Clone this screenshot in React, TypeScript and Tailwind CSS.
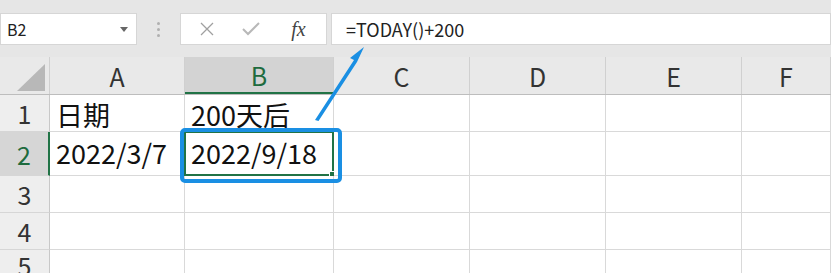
import React from 'react';

const cols = ['A', 'B', 'C', 'D', 'E', 'F'];
const rowHeights = ['h-[37px]', 'h-[44px]', 'h-[37px]', 'h-[37px]', 'h-[30px]'];
const colWidths = ['w-[135px]', 'w-[149px]', 'w-[136px]', 'w-[136px]', 'w-[136px]', 'w-[89px]'];

const cells: Record<string, string> = {
  A1: '日期',
  B1: '200天后',
  A2: '2022/3/7',
  B2: '2022/9/18',
};

const cellFont = { fontFamily: '"Noto Sans CJK SC", "Noto Sans", sans-serif' };

const App = () => {
  return (
    <div className="relative w-[831px] h-[273px] overflow-hidden bg-white" style={{ fontFamily: '"Noto Sans", "Noto Sans CJK SC", sans-serif' }}>
      {/* Formula bar */}
      <div className="h-[57px] bg-[#e6e6e6] flex items-start pt-[13px]">
        <div className="w-[137px] h-[32px] bg-white border border-[#d6d6d6] flex items-center justify-between pl-[6px] pr-[8px]">
          <span className="text-[16px] text-[#222]" style={cellFont}>B2</span>
          <svg width="8" height="5" viewBox="0 0 8 5"><path d="M0 0 L8 0 L4 5 Z" fill="#666" /></svg>
        </div>
        <div className="w-[43px] h-[32px] flex flex-col items-center justify-center gap-[3px]">
          <span className="w-[3px] h-[3px] rounded-full bg-[#b0b0b0]" />
          <span className="w-[3px] h-[3px] rounded-full bg-[#b0b0b0]" />
          <span className="w-[3px] h-[3px] rounded-full bg-[#b0b0b0]" />
        </div>
        <div className="w-[147px] h-[32px] bg-white border border-[#d6d6d6] flex items-center">
          <div className="w-[48px] flex justify-center pl-[4px]">
            <svg width="16" height="16" viewBox="0 0 16 16"><path d="M2 2 L14 14 M14 2 L2 14" stroke="#a0a0a0" strokeWidth="1.3" /></svg>
          </div>
          <div className="w-[44px] flex justify-center">
            <svg width="18" height="14" viewBox="0 0 18 14"><path d="M1 7 L6 12 L17 1" stroke="#b8b8b8" strokeWidth="2" fill="none" /></svg>
          </div>
          <div className="flex-1 flex justify-center pr-[2px]">
            <span className="text-[20px] italic text-[#444]" style={{ fontFamily: '"Liberation Serif", serif' }}>fx</span>
          </div>
        </div>
        <div className="ml-[4px] flex-1 h-[32px] bg-white border border-[#d6d6d6] flex items-center pl-[14px]">
          <span className="text-[18px] text-[#222]" style={cellFont}>=TODAY()+200</span>
        </div>
      </div>

      {/* Grid */}
      <div className="flex flex-col">
        <div className="flex h-[38px] bg-[#e9e9e9] border-b border-[#bdbdbd]">
          <div className="w-[50px] h-full flex items-end justify-end pr-[4px] pb-[3px] border-r border-[#d0d0d0]">
            <svg width="28" height="27" viewBox="0 0 28 27"><path d="M28 0 L28 27 L0 27 Z" fill="#b8b8b8" /></svg>
          </div>
          {cols.map((c, i) => (
            <div
              key={c}
              className={`${colWidths[i]} h-full flex items-center justify-center pt-[2px] border-r border-[#d0d0d0] text-[25px] ${c === 'B' ? 'bg-[#d3d3d3] text-[#1e6b3e] border-b-2 border-b-[#217346]' : 'text-[#333]'}`}
              style={cellFont}
            >
              {c}
            </div>
          ))}
        </div>
        {rowHeights.map((h, r) => (
          <div key={r} className={`flex ${h}`}>
            <div
              className={`w-[50px] h-full flex items-center justify-center pt-[2px] border-b border-[#d6d6d6] text-[25px] ${r === 1 ? 'bg-[#d6d6d6] text-[#1e6b3e] border-r-2 border-r-[#217346]' : 'bg-[#eeeeee] text-[#333] border-r border-r-[#c8c8c8]'}`}
              style={cellFont}
            >
              {r + 1}
            </div>
            {cols.map((c, i) => {
              const key = `${c}${r + 1}`;
              const selected = key === 'B2';
              return (
                <div
                  key={key}
                  className={`relative ${colWidths[i]} h-full flex items-center pl-[6px] ${r === 0 ? 'pt-[4px]' : ''} border-r border-b border-[#d9d9d9] text-[27px] text-[#111] whitespace-nowrap`}
                  style={cellFont}
                >
                  {cells[key]}
                  {selected && (
                    <div className="absolute inset-[-1px] border-2 border-[#217346]">
                      <div className="absolute right-[-3px] bottom-[-3px] w-[6px] h-[6px] bg-[#217346] border border-white" />
                    </div>
                  )}
                </div>
              );
            })}
          </div>
        ))}
      </div>

      {/* Annotation: blue frame and arrow */}
      <div className="absolute left-[180px] top-[128px] w-[162px] h-[55px] rounded-[5px] border-[4px] border-[#1a8fe3]" />
      <svg className="absolute left-0 top-0" width="831" height="273" viewBox="0 0 831 273">
        <path d="M315 120 L318.5 121 L357 62 L364 47 L350 58 L354 60 Z" fill="#1a8fe3" />
      </svg>
    </div>
  );
};

export default App;
